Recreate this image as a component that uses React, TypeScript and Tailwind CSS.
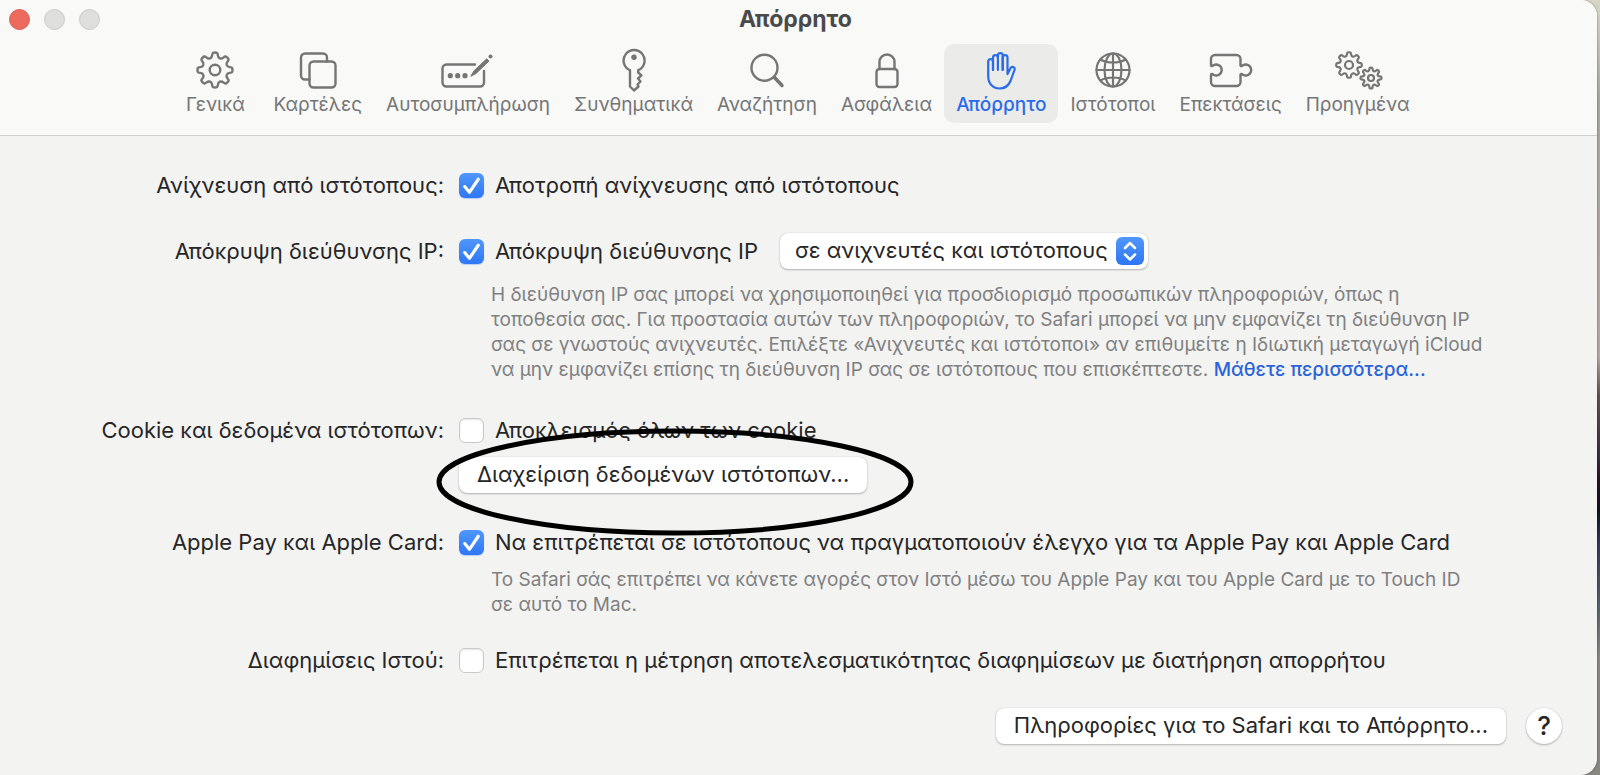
import { useState, type ReactNode } from "react";
import { cx } from "class-variance-authority";

const inputText = "text-[22px] leading-7 text-[#262626]";
const helpText = "ml-8 text-[19px] leading-[25px] text-[#808080]";
const pushButton =
  "h-9 rounded-lg bg-white px-[18px] pb-0.5 text-[22px] leading-7 text-[#262626] shadow-[0_1px_2px_rgba(0,0,0,0.25),0_0_1px_rgba(0,0,0,0.25)]";

// eight rounded teeth, corners softened with quadratic curves
function gearPath(x: number, y: number, outer: number, inner: number) {
  const points: [number, number][] = [];
  const add = (deg: number, r: number) => {
    const a = (deg * Math.PI) / 180;
    points.push([x + r * Math.cos(a), y + r * Math.sin(a)]);
  };
  for (let i = 0; i < 8; i++) {
    const c = i * 45;
    add(c - 14, inner);
    add(c - 9, outer);
    add(c - 4, outer + 0.3);
    add(c + 4, outer + 0.3);
    add(c + 9, outer);
    add(c + 14, inner);
  }
  const mid = (i: number) => {
    const [ax, ay] = points[i % points.length];
    const [bx, by] = points[(i + 1) % points.length];
    return `${((ax + bx) / 2).toFixed(2)} ${((ay + by) / 2).toFixed(2)}`;
  };
  let d = `M${mid(0)}`;
  for (let i = 1; i <= points.length; i++) {
    const [px, py] = points[i % points.length];
    d += `Q${px.toFixed(2)} ${py.toFixed(2)} ${mid(i)}`;
  }
  return d + "Z";
}

function Icon({ width, stroke = 2.4, children }: { width: number; stroke?: number; children: ReactNode }) {
  return (
    <svg
      width={width}
      height={44}
      viewBox={`0 0 ${width} 44`}
      fill="none"
      stroke="currentColor"
      strokeWidth={stroke}
      strokeLinecap="round"
      strokeLinejoin="round"
      aria-hidden="true"
    >
      {children}
    </svg>
  );
}

const tabs = [
  {
    id: "general",
    label: "Γενικά",
    icon: (
      <Icon width={38}>
        <path d={gearPath(19, 22, 17.2, 12.8)} />
        <circle cx="19" cy="22" r="5.3" />
      </Icon>
    ),
  },
  {
    id: "tabs",
    label: "Καρτέλες",
    icon: (
      <Icon width={38}>
        <path d="M10.5 31.5H6a4 4 0 0 1-4-4v-18a4 4 0 0 1 4-4h18a4 4 0 0 1 4 4v4" />
        <rect x="10.5" y="13.5" width="26" height="26" rx="4" />
      </Icon>
    ),
  },
  {
    id: "autofill",
    label: "Αυτοσυμπλήρωση",
    icon: (
      <Icon width={54}>
        <path d="M34 16.5H5.5a4 4 0 0 0-4 4v14a4 4 0 0 0 4 4H39a4 4 0 0 0 4-4V23" />
        <path d="M30 28l3-5.2L45.800 10.800l2.200 2.200-12.700 12.200z" fill="currentColor" strokeWidth="1" />
        <circle cx="49.500" cy="8.500" r="2" fill="currentColor" stroke="none" />
        <g fill="currentColor" stroke="none">
          <circle cx="9.300" cy="27.700" r="2.600" />
          <circle cx="16.700" cy="27.700" r="2.600" />
          <circle cx="24" cy="27.700" r="2.600" />
        </g>
      </Icon>
    ),
  },
  {
    id: "passwords",
    label: "Συνθηματικά",
    icon: (
      <Icon width={26}>
        <path d="M9 22.200A10.500 10.500 0 1 1 17.200 22.200V24.500L20.500 27.300 17 30.500 19.500 33.500 16.500 36.500 17.500 38.500 13 42.500 9 38.500z" />
        <circle cx="13" cy="9.300" r="2.700" fill="currentColor" stroke="none" />
      </Icon>
    ),
  },
  {
    id: "search",
    label: "Αναζήτηση",
    icon: (
      <Icon width={36}>
        <circle cx="15.500" cy="19.700" r="13" />
        <path d="M25.500 29.500l7.500 8" strokeWidth="3.400" />
      </Icon>
    ),
  },
  {
    id: "security",
    label: "Ασφάλεια",
    icon: (
      <Icon width={26}>
        <rect x="2.500" y="21" width="21" height="18" rx="3" />
        <path d="M5.500 21v-7a7.500 7.500 0 0 1 15 0v7" />
      </Icon>
    ),
  },
  {
    id: "privacy",
    label: "Απόρρητο",
    icon: (
      <Icon width={30} stroke={2.2}>
        <path d="M7 22V13.500a2.400 2.400 0 0 0-4.800 0V28c0 8 5 12.500 11.500 12.500 5.500 0 9-3 11-8l3.800-10.500c1-2.800-2.600-4.400-4-1.800L21.500 26V9.500a2.400 2.400 0 0 0-4.800 0V22" />
        <path d="M16.700 22V7.500a2.400 2.400 0 0 0-4.800 0V22" />
        <path d="M11.900 9.500a2.400 2.400 0 0 0-4.900 0V22" />
      </Icon>
    ),
  },
  {
    id: "websites",
    label: "Ιστότοποι",
    icon: (
      <Icon width={38} stroke={2.2}>
        <circle cx="19" cy="22" r="16.500" />
        <ellipse cx="19" cy="22" rx="8.500" ry="16.500" />
        <path d="M19 5.500v33M2.500 22h33M6.500 11.500c7 4 18 4 25 0M6.500 32.500c7-4 18-4 25 0" />
      </Icon>
    ),
  },
  {
    id: "extensions",
    label: "Επεκτάσεις",
    icon: (
      <Icon width={44}>
        <path d="M2 17v-6a4 4 0 0 1 4-4h21.500a4 4 0 0 1 4 4v6c0 1.500 1.500 1 2.500.2A5.500 5.500 0 1 1 34 26.800c-1-.8-2.500-1.300-2.500.2v7a4 4 0 0 1-4 4H6a4 4 0 0 1-4-4v-7c0-1.500 1.500-1 2.500-.2A5.500 5.500 0 1 0 4.500 17.200C3.500 18 2 18.500 2 17z" />
      </Icon>
    ),
  },
  {
    id: "advanced",
    label: "Προηγμένα",
    icon: (
      <Icon width={50} stroke={2.2}>
        <path d={gearPath(16, 17, 12.5, 9.2)} />
        <circle cx="16" cy="17" r="4" />
        <path d={gearPath(38, 30, 10.2, 7.3)} />
        <circle cx="38" cy="30" r="3" />
      </Icon>
    ),
  },
];

function CheckRow({ label, defaultChecked }: { label: string; defaultChecked?: boolean }) {
  return (
    <label className={cx("flex items-center gap-[11px]", inputText)}>
      <span className="relative flex size-[25px]">
        <input
          type="checkbox"
          defaultChecked={defaultChecked}
          className="peer size-[25px] appearance-none rounded-md border border-[#c9c9c8] bg-white shadow-[inset_0_1px_2px_rgba(0,0,0,0.1)] checked:border-0 checked:bg-linear-to-b checked:from-[#4f97f9] checked:to-[#2f76f6] checked:shadow-[0_1px_1px_rgba(47,118,246,0.3)]"
        />
        <svg
          viewBox="0 0 24 24"
          className="pointer-events-none absolute inset-0 size-[25px] opacity-0 peer-checked:opacity-100"
          fill="none"
          stroke="white"
          strokeWidth="3"
          strokeLinecap="round"
          strokeLinejoin="round"
        >
          <path d="M5.500 13l4.500 5.500L18.500 6" />
        </svg>
      </span>
      <span className="whitespace-nowrap">{label}</span>
    </label>
  );
}

function Row({ title, className, children }: { title: string; className?: string; children: ReactNode }) {
  return (
    <div className={cx("grid grid-cols-[444px_1fr] gap-x-[15px]", className)}>
      <div className={cx("text-right", inputText)}>{title}</div>
      <div>{children}</div>
    </div>
  );
}

export default function App() {
  const [active, setActive] = useState("privacy");

  return (
    <div className="min-h-screen bg-[linear-gradient(to_bottom,#d8d6c8_0%,#a8a898_13%,#b0aaa0_46%,#5a5450_51%,#3a2a45_59%,#2a1020_62%,#10102a_66%,#303860_70%,#50586a_77%,#8a8684_85%,#8a8684_100%)] pr-[3px] font-['Inter','Liberation_Sans',sans-serif]">
      <div className="flex min-h-screen flex-col overflow-hidden rounded-r-2xl bg-[#f3f3f2] shadow-[0_0_2px_rgba(0,0,0,0.5)]">
        <header className="border-b border-[#cfcfce] bg-[#f9f9f8] pr-1.5 pb-3">
          <div className="grid h-11 grid-cols-[1fr_auto_1fr] items-start px-[9px] pt-[5px]">
            <div className="flex gap-3.5 pt-1">
              <button aria-label="Κλείσιμο" className="size-[21px] rounded-full border border-[#dd5f54] bg-[#ec6a5e]" />
              <button aria-label="Ελαχιστοποίηση" className="size-[21px] rounded-full border border-[#cacac9] bg-[#dededd]" />
              <button aria-label="Μεγέθυνση" className="size-[21px] rounded-full border border-[#cacac9] bg-[#dededd]" />
            </div>
            <h1 className="text-[23px] leading-7 font-bold text-[#4a4a4a]">Απόρρητο</h1>
          </div>
          <nav className="flex justify-center">
            {tabs.map((tab) => (
              <button
                key={tab.id}
                onClick={() => setActive(tab.id)}
                className={cx(
                  "flex min-w-[92px] flex-col items-center rounded-[10px] px-3 pt-1 pb-[5px] text-[19px] leading-[26px]",
                  active === tab.id ? "bg-[#ebebea] font-medium text-[#2a6be9]" : "text-[#757575]"
                )}
              >
                {tab.icon}
                {tab.label}
              </button>
            ))}
          </nav>
        </header>

        <main className="pt-[35px]">
          <Row title="Ανίχνευση από ιστότοπους:">
            <CheckRow label="Αποτροπή ανίχνευσης από ιστότοπους" defaultChecked />
          </Row>

          <Row title="Απόκρυψη διεύθυνσης IP:" className="mt-[38px]">
            <div className="flex h-7 items-center gap-[22px]">
              <CheckRow label="Απόκρυψη διεύθυνσης IP" defaultChecked />
              <div className="relative">
                <select
                  aria-label="Απόκρυψη διεύθυνσης IP"
                  className="h-9 appearance-none rounded-lg bg-white pr-10 pb-0.5 pl-[15px] text-[22px] leading-7 text-[#262626] shadow-[0_1px_2px_rgba(0,0,0,0.25),0_0_1px_rgba(0,0,0,0.25)]"
                >
                  <option>σε ανιχνευτές και ιστότοπους</option>
                </select>
                <span className="pointer-events-none absolute top-1 right-1 flex size-7 items-center justify-center rounded-md bg-linear-to-b from-[#4f97f9] to-[#2f76f6]">
                  <svg width="28" height="28" viewBox="0 0 28 28" fill="none" stroke="white" strokeWidth="2.500" strokeLinecap="round" strokeLinejoin="round">
                    <path d="M9 11l5-5 5 5M9 17.500l5 5 5-5" />
                  </svg>
                </span>
              </div>
            </div>
            <p className={cx(helpText, "mt-[17px]")}>
              Η διεύθυνση IP σας μπορεί να χρησιμοποιηθεί για προσδιορισμό προσωπικών πληροφοριών, όπως η
              <br />
              τοποθεσία σας. Για προστασία αυτών των πληροφοριών, το Safari μπορεί να μην εμφανίζει τη διεύθυνση IP
              <br />
              σας σε γνωστούς ανιχνευτές. Επιλέξτε «Ανιχνευτές και ιστότοποι» αν επιθυμείτε η Ιδιωτική μεταγωγή iCloud
              <br />
              να μην εμφανίζει επίσης τη διεύθυνση IP σας σε ιστότοπους που επισκέπτεστε.{" "}
              <a href="#more" className="font-medium text-[#2a63da]">
                Μάθετε περισσότερα...
              </a>
            </p>
          </Row>

          <Row title="Cookie και δεδομένα ιστότοπων:" className="mt-[34px]">
            <div className="relative">
              <CheckRow label="Αποκλεισμός όλων των cookie" />
              <button className={cx(pushButton, "mt-[13px]")}>Διαχείριση δεδομένων ιστότοπων...</button>
              {/* hand-drawn highlight around the manage button */}
              <svg width="480" height="108" viewBox="0 0 480 108" className="pointer-events-none absolute top-3 -left-6" fill="none" stroke="black" strokeWidth="5">
                <ellipse cx="240" cy="54" rx="236" ry="51" />
              </svg>
            </div>
          </Row>

          <Row title="Apple Pay και Apple Card:" className="mt-[35px]">
            <CheckRow label="Να επιτρέπεται σε ιστότοπους να πραγματοποιούν έλεγχο για τα Apple Pay και Apple Card" defaultChecked />
            <p className={cx(helpText, "mt-[11px]")}>
              Το Safari σάς επιτρέπει να κάνετε αγορές στον Ιστό μέσω του Apple Pay και του Apple Card με το Touch ID
              <br />
              σε αυτό το Mac.
            </p>
          </Row>

          <Row title="Διαφημίσεις Ιστού:" className="mt-[29px]">
            <CheckRow label="Επιτρέπεται η μέτρηση αποτελεσματικότητας διαφημίσεων με διατήρηση απορρήτου" />
          </Row>

          <div className="mt-[34px] flex justify-end gap-5 pr-[35px]">
            <button className={pushButton}>Πληροφορίες για το Safari και το Απόρρητο...</button>
            <button
              aria-label="Βοήθεια"
              className="size-9 rounded-full bg-white text-[26px] leading-7 font-medium text-[#262626] shadow-[0_1px_2px_rgba(0,0,0,0.25),0_0_1px_rgba(0,0,0,0.25)]"
            >
              ?
            </button>
          </div>
        </main>
      </div>
    </div>
  );
}
